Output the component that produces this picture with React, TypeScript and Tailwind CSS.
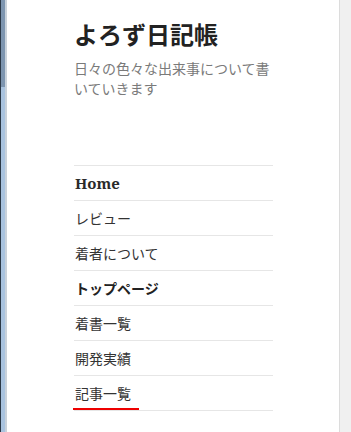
import React from "react";

const jp = { fontFamily: '"Noto Sans CJK JP", "Noto Sans", sans-serif' };

const items = [
  { label: "Home", kind: "home" },
  { label: "レビュー" },
  { label: "着者について" },
  { label: "トップページ", kind: "bold" },
  { label: "着書一覧" },
  { label: "開発実績" },
  { label: "記事一覧", kind: "active" },
];

export default function App() {
  return (
    <div className="flex h-[432px] w-[351px] overflow-hidden bg-white" style={jp}>
      <div className="flex h-full w-[7px] shrink-0">
        <div className="w-[1px] bg-[#2b3846]" />
        <div className="flex w-[4px] flex-col">
          <div className="h-[87px] bg-[#7d95b0]" />
          <div className="flex-1 bg-[#a9c3df]" />
        </div>
        <div className="w-[2px] bg-[#c9d2db]" />
      </div>
      <div className="flex-1 pl-[67px]">
        <div className="w-[199px]">
          <h1 className="mt-[19px] text-[24px] leading-[30px] font-bold text-[#222]">よろず日記帳</h1>
          <p className="mt-[9px] text-[14px] leading-[20px] text-[#7a7a7a]">
            日々の色々な出来事について書いていきます
          </p>
          <nav className="mt-[67px] border-t border-[#e6e6e6]">
            {items.map((it) => (
              <div
                key={it.label}
                className="relative flex h-[35px] items-center border-b border-[#e6e6e6] pl-[1px] text-[14px] text-[#333]"
              >
                {it.kind === "home" ? (
                  <span
                    className="text-[15px] font-bold text-[#2a2a2a]"
                    style={{ fontFamily: '"Noto Serif", "DejaVu Serif", "Liberation Serif", serif' }}
                  >
                    {it.label}
                  </span>
                ) : (
                  <span className={it.kind === "bold" ? "font-semibold text-[#222]" : ""}>{it.label}</span>
                )}
                {it.kind === "active" && (
                  <span className="absolute bottom-0 left-[-1px] h-[2px] w-[66px] bg-[#ee0000]" />
                )}
              </div>
            ))}
          </nav>
        </div>
      </div>
      <div className="h-full w-[12px] shrink-0 border-l border-[#dcdcdc] bg-[#f0f0f0]" />
    </div>
  );
}
